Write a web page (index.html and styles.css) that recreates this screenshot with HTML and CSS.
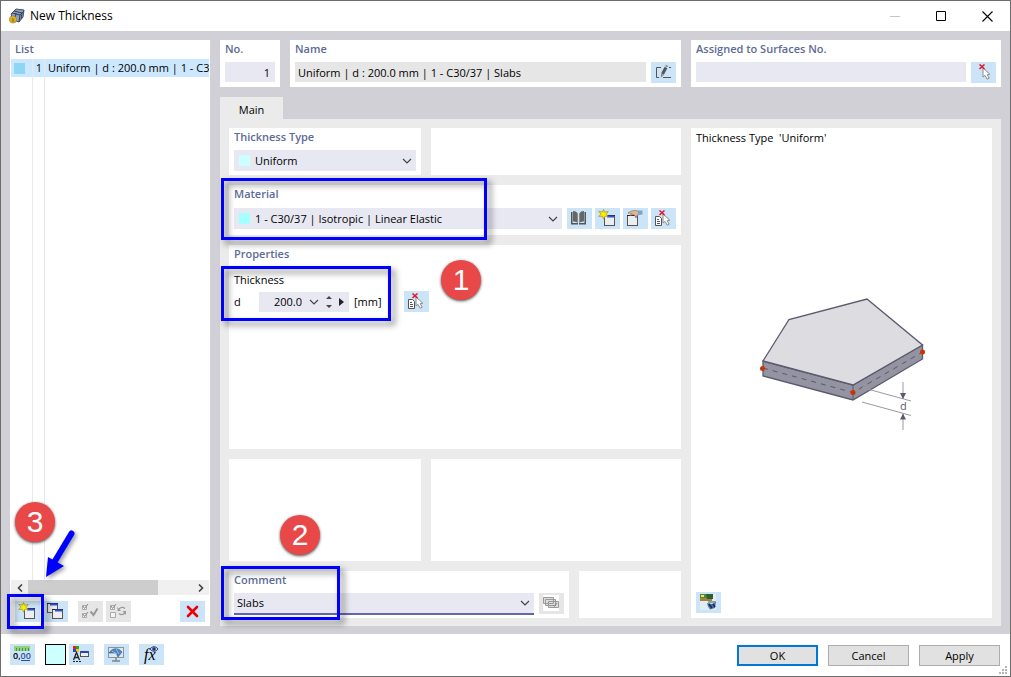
FILE: index.html
```html
<!DOCTYPE html>
<html lang="en">
<head>
    <meta charset="UTF-8">
    <meta name="viewport" content="width=device-width, initial-scale=1.0">
    <title>New Thickness</title>
    <link rel="stylesheet" href="styles.css">
</head>
<body>
    <!-- Shared icons -->
    <svg class="defs" aria-hidden="true">
        <symbol id="chevron" viewBox="0 0 10 6"><path d="M1 1l4 4 4-4" fill="none" stroke="#444" stroke-width="1.2"/></symbol>
        <symbol id="cursor" viewBox="0 0 25 21">
            <path d="M12 6v9l2-1.6 2.2 3.8 2-1-2-3.6 2.6-.4z" fill="#fff" stroke="#8a8a8a" stroke-width="1"/>
            <path d="M8.5 2.5l5 4.5M13.5 2.5l-5 4.5" stroke="#e81123" stroke-width="1.5"/>
        </symbol>
        <symbol id="pick-list" viewBox="0 0 25 21">
            <path d="M4.5 8.5h4l2 2v7h-6z" fill="#fff" stroke="#555"/>
            <path d="M6 11.5h2M6 13.5h3M6 15.5h3" stroke="#555"/>
            <use href="#cursor" width="25" height="21"/>
        </symbol>
        <symbol id="new-window" viewBox="0 0 25 21">
            <rect x="9.5" y="7.5" width="10" height="10" fill="#eee" stroke="#555"/>
            <path d="M9 7.5h11" stroke="#222"/>
            <path d="M12 8.5h7" stroke="#2b50e0" stroke-width="2"/>
            <path d="M8.5 1.5l1.200 2.800 3.600-1-2.200 3 2.200 2.200-3.300-.3-1.300 3-1.500-3-3.400.3 2.200-2.400-2.200-2.800 3.500.8z" fill="#ffee00" stroke="#8b8420" stroke-width=".6"/>
        </symbol>
    </svg>

    <div class="window">
        <header class="titlebar">
            <svg class="app-icon" viewBox="0 0 16 16">
                <path d="M2 6l5-5 8 1-1 7-4 5-6-2z" fill="#8ea0bd" stroke="#44506b"/>
                <path d="M3 5l8 2 4-4M11 7l-1 7M5 3l8 2M13 5l-1 6M7 5l-1 6" fill="none" stroke="#34405c"/>
                <circle cx="4" cy="11.5" r="3.600" fill="#e3b72a" stroke="#9a7412" stroke-width=".6"/>
                <path d="M4 10v4M2.5 11h3M2.5 13h3" stroke="#8c6a10" stroke-width=".7"/>
            </svg>
            <h1>New Thickness</h1>
            <button class="caption" aria-label="Minimize" disabled><svg viewBox="0 0 11 11"><path d="M0 5.5h10" stroke="#c4c4c4"/></svg></button>
            <button class="caption" aria-label="Maximize"><svg viewBox="0 0 11 11"><path d="M.5.5h9v9h-9z" fill="none" stroke="#000"/></svg></button>
            <button class="caption" aria-label="Close"><svg viewBox="0 0 11 11"><path d="M.5.5l10 10M10.5.5l-10 10" stroke="#000" stroke-width="1.1"/></svg></button>
        </header>

        <main class="content">
            <section class="panel list">
                <h2>List</h2>
                <table>
                    <colgroup><col class="col-color"><col class="col-no"><col></colgroup>
                    <tbody>
                        <tr class="selected"><td><span class="swatch blue"></span></td><td class="no">1</td><td>Uniform | d : 200.0 mm | 1 - C30/37 | Slabs</td></tr>
                        <tr><td></td><td></td><td></td></tr>
                    </tbody>
                </table>
                <div class="scrollbar">
                    <button aria-label="Scroll left"><svg viewBox="0 0 6 8"><path d="M5 .5L1.5 4 5 7.5" fill="none" stroke="#444" stroke-width="1.600"/></svg></button>
                    <div class="track"><div class="thumb"></div></div>
                    <button aria-label="Scroll right"><svg viewBox="0 0 6 8"><path d="M1 .5L4.5 4 1 7.5" fill="none" stroke="#444" stroke-width="1.600"/></svg></button>
                </div>
                <div class="list-tools">
                    <button class="tool" aria-label="New"><svg viewBox="0 0 25 21"><use href="#new-window"/></svg></button>
                    <button class="tool" aria-label="Copy"><svg viewBox="0 0 25 21">
                        <rect x="4.5" y="2.5" width="10" height="9" fill="#eee" stroke="#555"/><path d="M4 2.5h11" stroke="#222"/><path d="M7 3.5h7" stroke="#2b50e0" stroke-width="2"/>
                        <rect x="9.5" y="8.500" width="10" height="9" fill="#eee" stroke="#555"/><path d="M9 8.5h11" stroke="#222"/><path d="M12 9.5h7" stroke="#2b50e0" stroke-width="2"/>
                    </svg></button>
                    <button class="tool off checks" aria-label="Select all" disabled><svg viewBox="0 0 25 21">
                        <path d="M4.5 4.5h4v4h-4zM4.5 12.5h4v4h-4z" fill="#f4f4f4" stroke="#aaa"/><path d="M5 5l1.500 2.500L10 3M5 13l1.500 2.500L10 11" fill="none" stroke="#888"/>
                        <path d="M12.5 10.500l3 3.500 4-6.500" fill="none" stroke="#999" stroke-width="2"/>
                    </svg></button>
                    <button class="tool off" aria-label="Invert selection" disabled><svg viewBox="0 0 25 21">
                        <path d="M4.5 4.5h4v4h-4zM4.5 11.5h5v5h-5z" fill="#f4f4f4" stroke="#aaa"/><path d="M5 5l1.500 2.500L10 3" fill="none" stroke="#888"/>
                        <path d="M13 8c2-2 4-2 6-.5M19 12c-2 2-4 2-6 .5" fill="none" stroke="#999" stroke-width="1.200"/><path d="M11.500 6v4h3.500zM20 14v-4h-3.500z" fill="#999"/>
                    </svg></button>
                    <button class="tool delete" aria-label="Delete"><svg viewBox="0 0 25 21"><path d="M8 6l9 9M17 6l-9 9" stroke="#f00000" stroke-width="2.600" stroke-linecap="round"/></svg></button>
                    <div class="mark mark-new"></div>
                    <span class="badge badge-3">3</span>
                    <svg class="arrow" viewBox="0 0 36 52"><path d="M28.5 6.5L12 34" stroke="#0000ff" stroke-width="6" stroke-linecap="round"/><path d="M3 50l2-20 16 9z" fill="#0000ff"/></svg>
                </div>
            </section>

            <div class="details">
                <div class="top-row">
                    <section class="panel number">
                        <label for="no">No.</label>
                        <div class="row"><input id="no" type="text" value="1"></div>
                    </section>
                    <section class="panel name">
                        <label for="name">Name</label>
                        <div class="row">
                            <input id="name" type="text" value="Uniform | d : 200.0 mm | 1 - C30/37 | Slabs" readonly>
                            <button class="tool" aria-label="Edit name"><svg viewBox="0 0 25 21">
                                <path d="M10 5.5H5.5v10H8M12 15.5h8M18 5.5h2" fill="none" stroke="#555"/><path d="M11.5 12L15 5.500" stroke="#555" stroke-width="3"/><path d="M10 11.500l2.800 1.500-3 2.700z" fill="#888"/><path d="M14.500 3.500l2.400 1.200" stroke="#888" stroke-width="1.5"/>
                            </svg></button>
                        </div>
                    </section>
                    <section class="panel assigned">
                        <label for="surfaces">Assigned to Surfaces No.</label>
                        <div class="row">
                            <input id="surfaces" type="text">
                            <button class="tool" aria-label="Select surfaces"><svg viewBox="0 0 25 21"><use href="#cursor"/></svg></button>
                        </div>
                    </section>
                </div>

                <nav class="tabs"><button class="tab">Main</button></nav>

                <div class="tab-body">
                    <div class="form">
                        <div class="form-row">
                            <section class="panel type">
                                <label for="type">Thickness Type</label>
                                <div class="row"><div class="combo">
                                    <span class="swatch pale"></span>
                                    <select id="type"><option>Uniform</option></select>
                                    <svg class="chevron"><use href="#chevron"/></svg>
                                </div></div>
                            </section>
                            <section class="panel fill"></section>
                        </div>

                        <section class="panel material">
                            <label for="material">Material</label>
                            <div class="row">
                                <div class="combo">
                                    <span class="swatch cyan"></span>
                                    <select id="material"><option>1 - C30/37 | Isotropic | Linear Elastic</option></select>
                                    <svg class="chevron"><use href="#chevron"/></svg>
                                </div>
                                <div class="tool-group">
                                    <button class="tool" aria-label="Library"><svg viewBox="0 0 25 21">
                                        <path d="M4 4h1.500v11H11v1.500H4zM19 4h-1.500v11H12v1.500h7z" fill="#555"/><path d="M6 3c2 0 3.700.8 4.700 2.500V15c-1-1-2.700-1.500-4.700-1.500zM17 3c-2 0-3.700.8-4.700 2.500V15c1-1 2.700-1.500 4.700-1.500z" fill="#666"/>
                                    </svg></button>
                                    <button class="tool" aria-label="New material"><svg viewBox="0 0 25 21"><use href="#new-window"/></svg></button>
                                    <button class="tool" aria-label="Edit material"><svg viewBox="0 0 25 21">
                                        <rect x="4.5" y="7.5" width="10" height="10" fill="#eee" stroke="#555"/><path d="M4 7.5h11" stroke="#222"/><path d="M12 9h3" stroke="#2b50e0"/>
                                        <path d="M5 5c2-2 5-2.500 8-2.500l3 1-1 4-3 1-1-2-4 1 2-2z" fill="#dcb898" stroke="#8a6a52" stroke-width=".6"/><path d="M15 2.500h4.500v4L15 7z" fill="#7ea3c8"/>
                                    </svg></button>
                                    <button class="tool" aria-label="Pick material"><svg viewBox="0 0 25 21"><use href="#pick-list"/></svg></button>
                                </div>
                            </div>
                            <div class="mark mark-material"></div>
                        </section>

                        <section class="panel properties">
                            <h2>Properties</h2>
                            <p>Thickness</p>
                            <div class="thickness">
                                <label for="d">d</label>
                                <div class="spinner">
                                    <input id="d" type="text" value="200.0">
                                    <button aria-label="Values"><svg viewBox="0 0 10 6"><use href="#chevron"/></svg></button>
                                    <button class="updown" aria-label="Step"><svg viewBox="0 0 6 12"><path d="M3 0l3 3H0zM3 12l3-3H0z" fill="#444"/></svg></button>
                                    <button class="more" aria-label="More"><svg viewBox="0 0 5 8"><path d="M0 0l5 4-5 4z" fill="#222"/></svg></button>
                                </div>
                                <span class="unit">[mm]</span>
                                <button class="tool" aria-label="Pick thickness"><svg viewBox="0 0 25 21"><use href="#pick-list"/></svg></button>
                            </div>
                            <div class="mark mark-thickness"></div>
                            <span class="badge badge-1">1</span>
                        </section>

                        <div class="form-row middle">
                            <section class="panel type"><span class="badge badge-2">2</span></section>
                            <section class="panel fill"></section>
                        </div>

                        <div class="form-row">
                            <section class="panel comment">
                                <label for="comment">Comment</label>
                                <div class="row">
                                    <div class="combo active">
                                        <select id="comment"><option>Slabs</option></select>
                                        <svg class="chevron"><use href="#chevron"/></svg>
                                    </div>
                                    <button class="tool off" aria-label="Comment templates" disabled><svg viewBox="0 0 25 21">
                                        <path d="M4 2h16v16H4z" fill="#fff"/><path d="M4.5 4.5h10v6h-10zM6.5 6.500h10v6h-10zM9.500 8.500h10v6h-10z" fill="#ddd" stroke="#999"/><path d="M14 12l1.500 1.500 2.500-3.500" fill="none" stroke="#888"/>
                                    </svg></button>
                                </div>
                                <div class="mark mark-comment"></div>
                            </section>
                            <section class="panel extra"></section>
                        </div>
                    </div>

                    <section class="panel preview">
                        <p>Thickness Type&nbsp; 'Uniform'</p>
                        <svg class="plate" viewBox="-3 9 210 160">
                            <path d="M23 81v15l90 24 69.500-41V65L113 105z" fill="#9493a1" stroke="#5b596e" stroke-width="1.300"/>
                            <path d="M23 81l26-41.500 78-20.500 55.500 46L113 105z" fill="#dddce1" stroke="#5b596e" stroke-width="1.300"/>
                            <path d="M113 105v15" stroke="#5b596e"/>
                            <path d="M23 88l90 24.500 69.500-40.500" fill="none" stroke="#5b596e" stroke-dasharray="5 5"/>
                            <path d="M122 107.500l49 13.500M122 122l49 13.500" stroke="#9a99a5"/>
                            <path d="M163 102v17M163 134v16" stroke="#9a99a5"/>
                            <path d="M160 113h6l-3 6zM160 139.500h6l-3-6z" fill="#5b596e"/>
                            <circle cx="22.500" cy="88.500" r="2.500"/><circle cx="113" cy="112.500" r="2.500"/><circle cx="182.500" cy="72" r="2.500"/>
                            <text x="160" y="130">d</text>
                        </svg>
                        <button class="tool" aria-label="Image"><svg viewBox="0 0 25 21">
                            <path d="M4 2h16v16H4z" fill="#e4edf2"/><path d="M4 2h8v7H4z" fill="#4f8a3c"/><path d="M4 6h12v3H4z" fill="#9a8740"/><path d="M5 3h3v2H5z" fill="#ffe14a"/><path d="M10 2h7v5h-6z" fill="#2f5f2e"/><path d="M12 9h8v2h-8z" fill="#8fa3a0"/>
                            <path d="M11 11l5 1 4-2-1 6-5 1.500-2-3z" fill="#4c74ad"/><path d="M13 12l3 4M17 12l2 3" stroke="#16294d" stroke-width="1.5"/>
                        </svg></button>
                    </section>
                </div>
            </div>
        </main>

        <footer class="footer">
            <button class="tool" aria-label="Units"><svg viewBox="0 0 25 21"><path d="M4 2h16v5H4z" fill="#8fd17f"/><path d="M6.5 4v3M9.5 4v3M12.5 4v3M15.5 4v3M18.5 4v3" stroke="#4d9440"/><path d="M11 16.5h9" stroke="#2b50a0"/><text class="decimal" x="3" y="15">0,<tspan>00</tspan></text></svg></button>
            <button class="color" aria-label="Color"></button>
            <button class="tool" aria-label="Display"><svg viewBox="0 0 25 21">
                <path d="M4 2h3v3H4z" fill="#e32020"/><path d="M7 2h3v3H7z" fill="#28a428"/><path d="M4 5h3v3H4z" fill="#2644d8"/><path d="M7 5h3v3H7z" fill="#f0d000"/>
                <path d="M4.500 16L7.500 8.500l3 7.500M5.500 13.500h4" fill="none" stroke="#222" stroke-width="1.300"/><path d="M4 17.500h8" stroke="#222" stroke-dasharray="2 1"/><rect x="11.500" y="7.500" width="8" height="5" fill="#eee" stroke="#555"/><path d="M12 8h7" stroke="#2444c0" stroke-width="2"/>
            </svg></button>
            <button class="tool wide" aria-label="View"><svg viewBox="0 0 25 21">
                <rect x="4.500" y="3.500" width="15" height="10" fill="#dbe8f2" stroke="#8a929a"/><path d="M12 14v3M8 17h8" stroke="#7b838a" stroke-width="1.500"/><path d="M5 9c3-5 9-6 13-1l-4 5-2-4z" fill="#4c86bb" stroke="#2c5a87" stroke-width=".6"/><path d="M8 7l5 3M12 5l3 5" stroke="#b9d6ee" stroke-width=".7"/>
            </svg></button>
            <button class="tool wide" aria-label="Formula"><svg viewBox="0 0 25 21"><text class="formula" x="5" y="16">fx</text><path d="M11 5c2-3 6-3 8 0-2 3-6 3-8 0z" fill="#c9cfeb" stroke="#33407c"/><circle cx="15" cy="5" r="1.800" fill="#28346e"/></svg></button>
            <div class="actions">
                <button class="primary">OK</button>
                <button>Cancel</button>
                <button>Apply</button>
            </div>
            <svg class="grip" viewBox="0 0 8 8"><path d="M6 0h2v2H6zM3 3h2v2H3zM6 3h2v2H6zM0 6h2v2H0zM3 6h2v2H3zM6 6h2v2H6z" fill="#b5b5b5"/></svg>
        </footer>
    </div>
</body>
</html>
```
FILE: styles.css
```css
* {
    box-sizing: border-box;
}
body {
    margin: 0;
    font-family: "Open Sans", "Noto Sans", sans-serif;
    font-size: 11px;
    line-height: 16px;
    color: #000;
}
button, input, select {
    font: inherit;
    color: inherit;
    margin: 0;
    padding: 0;
    border: 0;
    border-radius: 0;
    background: none;
}
button svg {
    display: block;
}
.defs {
    position: absolute;
    width: 0;
    height: 0;
}
.window {
    display: flex;
    flex-direction: column;
    min-height: 100vh;
    border: 1px solid #6d6d6d;
    background: #fff;
}

/* Title bar */
.titlebar {
    display: flex;
    align-items: center;
    height: 30px;
    padding-left: 8px;
}
.app-icon {
    width: 16px;
    height: 16px;
}
h1 {
    flex: 1;
    margin: 0 0 0 5px;
    font-size: 12px;
    font-weight: normal;
}
.caption {
    width: 46px;
    height: 30px;
}
.caption svg {
    width: 11px;
    height: 11px;
    margin: 0 auto;
}

/* Main area */
.content {
    flex: 1;
    display: flex;
    gap: 10px;
    padding: 9px 9px 8px;
    background: #d1d0d6;
}
.panel {
    position: relative;
    padding: 0 5px;
    background: #fff;
}
.panel > label, h2 {
    display: block;
    height: 22px;
    margin: 0;
    font-size: 11px;
    font-weight: 600;
    line-height: 18px;
    color: #5d6b96;
}
.row {
    display: flex;
    gap: 5px;
    padding-bottom: 4px;
}
.row input {
    flex: 1;
    width: 100%;
    min-width: 0;
    height: 20px;
    padding: 1px 3px 0;
    background: #e8e8f2;
}
.row input[readonly] {
    background: #e6e6e6;
}
.number input {
    padding-right: 5px;
    text-align: right;
}
.number .row {
    padding-bottom: 5px;
}
.tool {
    flex: none;
    width: 25px;
    height: 21px;
    background: #cce4f7;
}
.tool svg {
    width: 25px;
    height: 21px;
}
.tool.off {
    background: #e6e6e6;
}
.tool-group {
    display: flex;
    gap: 3px;
}
.swatch {
    display: block;
    width: 11px;
    height: 11px;
}
.blue {
    background: #8fd6f6;
}
.pale {
    background: #ccffff;
}
.cyan {
    background: #a6ffff;
}

/* List */
.list {
    display: flex;
    flex-direction: column;
    width: 200px;
    padding: 0 1px;
}
.list h2 {
    height: 19px;
    padding-left: 4px;
}
.list table {
    flex: 1;
    width: 100%;
    table-layout: fixed;
    border-spacing: 0;
}
.col-color {
    width: 22px;
}
.col-no {
    width: 12px;
}
.list td {
    padding: 0 0 0 3px;
    border-right: 1px solid #e8e8e8;
    overflow: hidden;
    white-space: nowrap;
}
.list td:last-child {
    border-right: 0;
}
.list .no {
    padding: 0 2px 0 0;
    text-align: right;
}
.selected {
    height: 18px;
    background: #cce8ff;
}
.scrollbar {
    display: flex;
    height: 15px;
    background: #f0f0f0;
}
.scrollbar button {
    width: 17px;
}
.scrollbar svg {
    width: 6px;
    height: 8px;
    margin: 0 auto;
}
.track {
    flex: 1;
}
.thumb {
    width: 79%;
    height: 15px;
    background: #cdcdcd;
}
.list-tools {
    position: relative;
    display: flex;
    gap: 3px;
    padding: 6px 4px 4px;
}
.checks {
    margin-left: 7px;
}
.delete {
    margin-left: auto;
}

/* Right side */
.details {
    flex: 1;
    display: flex;
    flex-direction: column;
    min-width: 0;
}
.top-row {
    display: flex;
    gap: 10px;
}
.number {
    width: 60px;
}
.name {
    flex: 1;
}
.assigned {
    width: 310px;
}
.tabs {
    margin-top: 10px;
}
.tab {
    display: block;
    width: 63px;
    height: 22px;
    padding-top: 4px;
    background: #ebebeb;
}
.tab-body {
    flex: 1;
    display: flex;
    gap: 10px;
    padding: 9px 9px 8px;
    background: #ebebeb;
}
.form {
    flex: 1;
    display: flex;
    flex-direction: column;
    gap: 10px;
    min-width: 0;
}
.form-row {
    display: flex;
    gap: 10px;
}
.type {
    width: 192px;
}
.fill, .comment {
    flex: 1;
}
.combo {
    position: relative;
    flex: 1;
    display: flex;
    align-items: center;
    height: 21px;
    background: #e8e8f2;
}
.combo .swatch {
    margin-left: 5px;
}
.combo select {
    flex: 1;
    height: 21px;
    padding-left: 5px;
    appearance: none;
}
.combo.active {
    height: 22px;
    border-bottom: 2px solid #6464af;
}
.combo.active select {
    padding-left: 3px;
}
.chevron {
    position: absolute;
    right: 4px;
    width: 10px;
    height: 6px;
    pointer-events: none;
}
.material > label {
    height: 23px;
}
.material .row {
    padding-bottom: 6px;
}
.comment .row {
    padding-bottom: 3px;
}
.properties {
    flex: 1;
}
.properties h2 {
    height: 27px;
}
.properties p {
    margin: 0;
}
.thickness {
    display: flex;
    align-items: center;
    margin-top: 3px;
}
.thickness > label {
    width: 25px;
}
.spinner {
    display: flex;
    align-items: center;
    gap: 7px;
    width: 90px;
    height: 20px;
    background: #e8e8f2;
}
.spinner input {
    width: 43px;
    text-align: right;
}
.spinner svg {
    width: 10px;
    height: 6px;
}
.spinner .updown svg {
    width: 6px;
    height: 12px;
}
.spinner .more svg {
    width: 5px;
    height: 8px;
}
.unit {
    width: 55px;
    padding-left: 5px;
}
.middle {
    height: 102px;
}
.extra {
    width: 102px;
}
.preview {
    display: flex;
    flex-direction: column;
    width: 301px;
    padding-bottom: 5px;
}
.preview p {
    margin: 2px 0 0;
}
.plate {
    width: 210px;
    height: 160px;
    margin: auto;
}
.plate circle {
    fill: #cc3300;
}
.plate text {
    font-size: 11px;
    fill: #5b596e;
}

/* Footer */
.footer {
    position: relative;
    display: flex;
    height: 42px;
    padding: 10px 9px 0;
}
.color {
    width: 21px;
    height: 21px;
    margin: 0 3px 0 10px;
    border: 1px solid #000;
    background: #ccffff;
}
.wide {
    margin-left: 10px;
}
.decimal {
    font-size: 9px;
    font-weight: 600;
}
.decimal tspan {
    fill: #2b50a0;
}
.formula {
    font: italic 16px "Liberation Serif", serif;
}
.actions {
    display: flex;
    gap: 10px;
    margin: 1px 1px 0 auto;
}
.actions button {
    width: 81px;
    height: 21px;
    border: 1px solid #adadad;
    background: #e1e1e1;
}
.actions .primary {
    border: 2px solid #0078d7;
}
.grip {
    position: absolute;
    right: 3px;
    bottom: 2px;
    width: 8px;
    height: 8px;
}

/* Step markers over the form */
.mark {
    position: absolute;
    z-index: 1;
    border: 3px solid #0000ff;
    filter: drop-shadow(4px 4px 3px rgba(0, 0, 0, 0.5));
    pointer-events: none;
}
.mark-new {
    left: -4px;
    top: -1px;
    width: 37px;
    height: 35px;
}
.mark-material {
    left: -8px;
    top: -7px;
    width: 266px;
    height: 62px;
}
.mark-thickness {
    left: -8px;
    top: 21px;
    width: 170px;
    height: 55px;
}
.mark-comment {
    left: -8px;
    top: -5px;
    width: 119px;
    height: 54px;
}
.badge {
    position: absolute;
    z-index: 1;
    width: 40px;
    height: 40px;
    border-radius: 50%;
    background: #e84848;
    box-shadow: 0 1px 3px rgba(0, 0, 0, 0.7);
    color: #fff;
    font: 30px/40px "Liberation Sans", sans-serif;
    text-align: center;
}
.badge-1 {
    left: 212px;
    top: 15px;
}
.badge-2 {
    left: 51px;
    top: 56px;
}
.badge-3 {
    left: 4px;
    top: -93px;
}
.arrow {
    position: absolute;
    z-index: 1;
    left: 32px;
    top: -68px;
    width: 36px;
    height: 52px;
    filter: drop-shadow(2px 2px 2px rgba(0, 0, 0, 0.4));
}
```
